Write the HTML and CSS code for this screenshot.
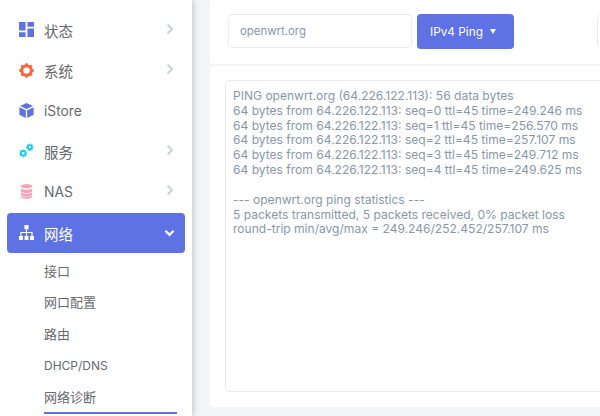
FILE: index.html
```html
<!DOCTYPE html>
<html lang="zh">
<head>
<meta charset="utf-8">
<title>网络诊断</title>
<link rel="stylesheet" href="styles.css">
</head>
<body>
<aside class="sidebar">
  <nav class="menu">
    <a class="item">
      <svg class="icon" viewBox="0 0 16 16"><path fill="#5e72e4" d="M0 0h7v9H0zM9 0h7v5H9zM9 7h7v9H9zM0 11h7v5H0z"/></svg>
      <span class="label">状态</span>
      <svg class="chev" viewBox="0 0 8 12"><path d="M1.5 1.5 6 6l-4.500 4.500" fill="none" stroke="#ced4da" stroke-width="2.200"/></svg>
    </a>
    <a class="item">
      <svg class="icon" viewBox="0 0 16 16"><circle cx="8" cy="8" r="5" fill="none" stroke="#fb6340" stroke-width="3.200"/><path stroke="#fb6340" stroke-width="2.600" d="M8 .2v3M8 12.800v3M.2 8h3M12.800 8h3M2.500 2.500l2 2M11.500 11.500l2 2M13.500 2.500l-2 2M4.500 11.500l-2 2"/></svg>
      <span class="label">系统</span>
      <svg class="chev" viewBox="0 0 8 12"><path d="M1.5 1.500 6 6l-4.500 4.500" fill="none" stroke="#ced4da" stroke-width="2.200"/></svg>
    </a>
    <a class="item">
      <svg class="icon" viewBox="0 0 16 16"><path fill="#5e72e4" d="M8 0 15 3.200 8 6.400 1 3.200zM.4 4.600 7.300 7.800V16L.4 12.500zM15.600 4.600 8.700 7.800V16l6.900-3.500z"/></svg>
      <span class="label latin">iStore</span>
    </a>
    <a class="item">
      <svg class="icon" viewBox="0 0 16 16"><g fill="none" stroke="#11cdef" stroke-width="2"><circle cx="4.500" cy="11" r="2.500"/><circle cx="11.500" cy="4.500" r="2.200"/></g><path stroke="#11cdef" stroke-width="1.400" d="M4.500 6.800v1M4.500 14.200v1.300M.4 11h1M7.500 11h1M1.500 8l1 1M6.500 13l1 1M7.500 8l-1 1M2.500 13l-1 1M11.500.6v1M11.500 7.400v1M7.600 4.500h1M14.400 4.500h1M8.700 1.700l.8.800M13.500 6.500l.8.800M14.300 1.700l-.8.800"/></svg>
      <span class="label">服务</span>
      <svg class="chev" viewBox="0 0 8 12"><path d="M1.500 1.500 6 6l-4.500 4.500" fill="none" stroke="#ced4da" stroke-width="2.200"/></svg>
    </a>
    <a class="item">
      <svg class="icon" viewBox="0 0 16 16"><path fill="#f5a5b8" d="M2 2.500C2 1 5 .3 8 .3s6 .7 6 2.200-3 2.200-6 2.200-6-.7-6-2.200zM2 4.800c1.500 1 3.800 1.300 6 1.300s4.500-.3 6-1.300v2.700c0 1.500-3 2.200-6 2.200s-6-.7-6-2.200zM2 9c1.500 1 3.800 1.400 6 1.400s4.500-.4 6-1.400v2.500c0 1.500-3 2.100-6 2.100s-6-.6-6-2.100zM2 12.900c1.500 1 3.800 1.200 6 1.200s4.500-.2 6-1.200v.6c0 1.500-3 2.200-6 2.200s-6-.7-6-2.200z"/></svg>
      <span class="label latin">NAS</span>
      <svg class="chev" viewBox="0 0 8 12"><path d="M1.500 1.500 6 6l-4.500 4.500" fill="none" stroke="#ced4da" stroke-width="2.200"/></svg>
    </a>
    <a class="item active">
      <svg class="icon" viewBox="0 0 16 16"><path fill="#fff" d="M5.800 0h4.400v4.400H5.800zM0 11.600h4.200V16H0zM5.900 11.600h4.200V16H5.900zM11.800 11.600H16V16h-4.200z"/><path fill="none" stroke="#fff" stroke-width="1.200" d="M8 4.400v7.200M2.100 11.600V8h11.800v3.600"/></svg>
      <span class="label">网络</span>
      <svg class="chev-down" viewBox="0 0 12 8"><path d="M1.500 1.500 6 6l4.500-4.500" fill="none" stroke="#fff" stroke-width="2.400"/></svg>
    </a>
  </nav>
  <ul class="submenu">
    <li>接口</li>
    <li>网口配置</li>
    <li>路由</li>
    <li class="latin">DHCP/DNS</li>
    <li class="current">网络诊断</li>
  </ul>
</aside>
<main class="main">
  <section class="card toolbar">
    <div class="field">openwrt.org</div>
    <div class="btn">IPv4 Ping<span class="caret"></span></div>
    <div class="field next"></div>
  </section>
  <section class="card output-card">
    <pre class="output">PING openwrt.org (64.226.122.113): 56 data bytes
64 bytes from 64.226.122.113: seq=0 ttl=45 time=249.246 ms
64 bytes from 64.226.122.113: seq=1 ttl=45 time=256.570 ms
64 bytes from 64.226.122.113: seq=2 ttl=45 time=257.107 ms
64 bytes from 64.226.122.113: seq=3 ttl=45 time=249.712 ms
64 bytes from 64.226.122.113: seq=4 ttl=45 time=249.625 ms

--- openwrt.org ping statistics ---
5 packets transmitted, 5 packets received, 0% packet loss
round-trip min/avg/max = 249.246/252.452/257.107 ms</pre>
  </section>
</main>
</body>
</html>
```
FILE: styles.css
```css
* { box-sizing: border-box; }
html, body { margin: 0; height: 416px; overflow: hidden; }
body {
  display: flex;
  width: 600px;
  background: #f4f5f7;
  font-family: Inter, "Noto Sans CJK SC", sans-serif;
}
.sidebar {
  flex: 0 0 192px;
  height: 416px;
  overflow: hidden;
  background: #fff;
  box-shadow: 0 0 8px rgba(0, 0, 0, .28);
  padding-top: 10px;
  position: relative;
  z-index: 1;
}
.menu { display: flex; flex-direction: column; padding: 0 7px; }
.item {
  display: flex;
  align-items: center;
  height: 40.400px;
  padding: 0 12px;
  font-size: 14.500px;
  color: #67696d;
  border-radius: 4px;
}
.icon { width: 15px; height: 15px; flex: none; margin-right: 10px; margin-top: -1px; }
.label { flex: 1; }
.label.latin { font-size: 13.800px; }
.chev { width: 8px; height: 12px; flex: none; margin: -3px -1px 0 0; }
.chev-down { width: 11px; height: 8px; flex: none; margin: 0 -2px 0 0; }
.active { background: #5e72e4; color: #fff; margin-top: 1px; }
.submenu { list-style: none; margin: 1px 0 0; padding: 0 15px 0 44px; }
.submenu li {
  height: 31.700px;
  display: flex;
  align-items: center;
  font-size: 13px;
  color: #67696d;
}
.submenu .latin { font-size: 12px; }
.submenu .current { height: 33px; border-bottom: 2px solid #5e72e4; }
.main { flex: 1; min-width: 0; padding: 0 0 9px 18px; display: flex; flex-direction: column; gap: 2px; }
.card { background: #fff; border-radius: 4px 0 0 4px; }
.toolbar {
  height: 64px;
  flex: none;
  display: flex;
  gap: 5px;
  align-items: flex-start;
  padding: 14px 0 0 18px;
  overflow: hidden;
}
.field {
  flex: none;
  width: 184px;
  height: 34px;
  border: 1px solid #e9ecef;
  border-radius: 5px;
  padding: 0 11px;
  display: flex;
  align-items: center;
  font-size: 11.400px;
  color: #8898aa;
}
.btn {
  flex: none;
  width: 97px;
  height: 35px;
  background: #5e72e4;
  color: #fff;
  border-radius: 4px;
  padding-left: 13px;
  display: flex;
  align-items: center;
  font-size: 11.800px;
}
.caret {
  width: 0;
  height: 0;
  margin-left: 7px;
  border: 3px solid transparent;
  border-top: 5px solid #fff;
  border-bottom: 0;
}
.field.next { margin-left: 78px; }
.output-card { flex: 1; padding: 14px 0 15px 15px; overflow: hidden; }
.output {
  margin: 0;
  height: 100%;
  width: 420px;
  border: 1px solid #e9ecef;
  border-radius: 4px;
  padding: 8px 7px 7px;
  font: 12.050px/14.830px Inter, sans-serif;
  color: #8898aa;
  white-space: pre;
}
```
